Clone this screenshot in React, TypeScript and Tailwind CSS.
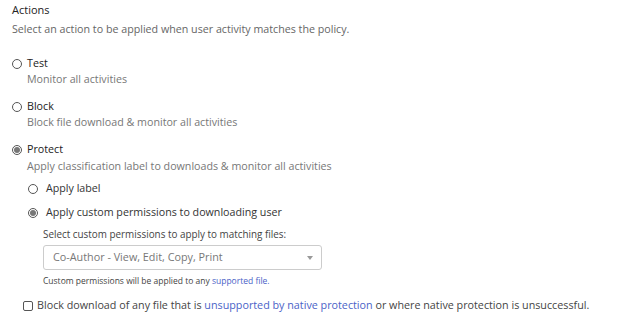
import React from 'react';

const Radio = ({ checked }: { checked?: boolean }) => (
    <span className="flex h-[10px] w-[10px] shrink-0 items-center justify-center rounded-full border border-[#555] bg-white">
        {checked && <span className="h-[6px] w-[6px] rounded-full bg-[#777]"></span>}
    </span>
);

const App = () => {
    return (
        <div className="h-[322px] w-[629px] bg-white pl-[12px] pt-[2px] font-['Open_Sans',sans-serif] text-[10.7px] text-[#333]">
            {/* Header */}
            <div className="text-[11px] leading-[16px] text-[#222]">Actions</div>
            <div className="mt-[4px] leading-[15px] text-[#666]">
                Select an action to be applied when user activity matches the policy.
            </div>

            {/* Options */}
            <div className="mt-[19px] flex flex-col gap-[12px]">
                <div>
                    <div className="flex items-center gap-[5px] leading-[15px]">
                        <Radio />
                        <span className="text-[#222]">Test</span>
                    </div>
                    <div className="mt-[1px] pl-[15px] leading-[15px] text-[#777]">Monitor all activities</div>
                </div>

                <div>
                    <div className="flex items-center gap-[5px] leading-[15px]">
                        <Radio />
                        <span className="text-[#222]">Block</span>
                    </div>
                    <div className="mt-[1px] pl-[15px] leading-[15px] text-[#777]">
                        Block file download &amp; monitor all activities
                    </div>
                </div>

                <div>
                    <div className="flex items-center gap-[5px] leading-[15px]">
                        <Radio checked />
                        <span className="text-[#222]">Protect</span>
                    </div>
                    <div className="mt-[2px] pl-[15px] leading-[15px] text-[#777]">
                        Apply classification label to downloads &amp; monitor all activities
                    </div>

                    {/* Protect sub-options */}
                    <div className="mt-[7px] pl-[16px]">
                        <div className="flex items-center gap-[8px] leading-[15px]">
                            <Radio />
                            <span className="text-[#333]">Apply label</span>
                        </div>
                        <div className="mt-[9px] flex items-center gap-[8px] leading-[15px]">
                            <Radio checked />
                            <span className="text-[#333]">Apply custom permissions to downloading user</span>
                        </div>

                        <div className="pl-[15px]">
                            <div className="mt-[8px] text-[9.9px] leading-[13px] text-[#444]">
                                Select custom permissions to apply to matching files:
                            </div>
                            <div className="mt-[4px] flex h-[25px] w-[279px] items-center justify-between rounded-[3px] border border-[#ccc] pl-[9px] pr-[8px] text-[10.8px] text-[#777]">
                                <span>Co-Author - View, Edit, Copy, Print</span>
                                <svg width="6" height="4" viewBox="0 0 6 4">
                                    <path d="M0 0h6L3 4z" fill="#999" />
                                </svg>
                            </div>
                            <div className="mt-[5px] text-[8.5px] leading-[12px] text-[#444]">
                                Custom permissions will be applied to any{' '}
                                <span className="text-[#4a62c7]">supported file.</span>
                            </div>
                        </div>
                    </div>
                </div>
            </div>

            {/* Checkbox */}
            <div className="mt-[11px] flex items-center gap-[4px] pl-[11px] text-[10.75px] leading-[15px]">
                <span className="h-[10px] w-[10px] shrink-0 rounded-[2px] border border-[#555] bg-white"></span>
                <span className="text-[#444]">
                    Block download of any file that is{' '}
                    <span className="text-[#4a62c7]">unsupported by native protection</span> or where native protection is
                    unsuccessful.
                </span>
            </div>
        </div>
    );
};

export default App;
